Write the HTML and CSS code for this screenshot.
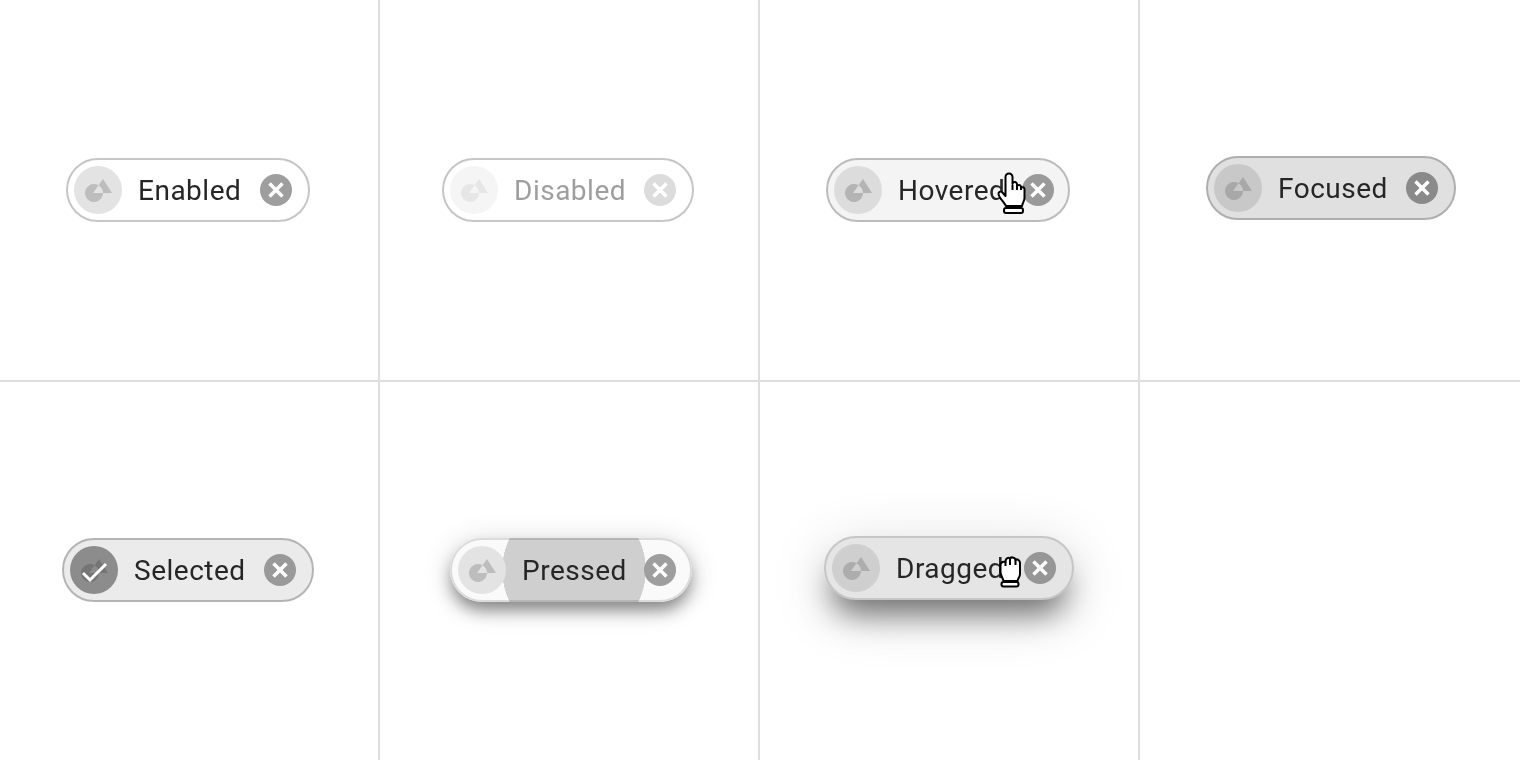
FILE: index.html
```html
<!DOCTYPE html>
<html>
<head>
    <meta name="viewport" content="width=device-width, initial-scale=1">
    <title>Input chip states</title>
    <link rel="stylesheet" href="styles.css">
</head>
<body>
    <main class="board">
        <section class="cell">
            <div class="chip chip-enabled">
                <span class="avatar"><svg class="shape" viewBox="0 0 48 48"><path fill-rule="evenodd" d="M29 13 L38 27 H19 Z M20 18 a9 9 0 1 0 0.01 0 Z"/></svg></span>
                <span class="label">Enabled</span>
                <svg class="close" viewBox="0 0 32 32"><circle cx="16" cy="16" r="16"/><path d="M9.5 9.5 L22.5 22.5 M22.5 9.5 L9.5 22.5"/></svg>
            </div>
        </section>

        <section class="cell">
            <div class="chip chip-disabled">
                <span class="avatar"><svg class="shape" viewBox="0 0 48 48"><path fill-rule="evenodd" d="M29 13 L38 27 H19 Z M20 18 a9 9 0 1 0 0.01 0 Z"/></svg></span>
                <span class="label">Disabled</span>
                <svg class="close" viewBox="0 0 32 32"><circle cx="16" cy="16" r="16"/><path d="M9.5 9.5 L22.5 22.5 M22.5 9.5 L9.5 22.5"/></svg>
            </div>
        </section>

        <section class="cell">
            <div class="chip chip-hovered">
                <span class="avatar"><svg class="shape" viewBox="0 0 48 48"><path fill-rule="evenodd" d="M29 13 L38 27 H19 Z M20 18 a9 9 0 1 0 0.01 0 Z"/></svg></span>
                <span class="label">Hovered</span>
                <svg class="close" viewBox="0 0 32 32"><circle cx="16" cy="16" r="16"/><path d="M9.5 9.5 L22.5 22.5 M22.5 9.5 L9.5 22.5"/></svg>
                <svg class="cursor cursor-point" viewBox="0 0 30 43">
                    <path d="M8.5 21 V5 a3.5 3.5 0 0 1 7 0 V12 a2.2 2.2 0 0 1 4.5 .5 V14 a2.2 2.2 0 0 1 4 .5 V16 a2 2 0 0 1 3.5 .5 V26 c0 3 -2 5 -2.5 8 H9 C7 30 2 26 1.5 22 c-.3 -2 2 -3 3.5 -2 L8.5 24 Z"/>
                    <path d="M15.5 13 V18 M20 14 V18 M24 16 V18"/>
                    <rect x="7" y="36" width="19" height="5" rx="2"/>
                </svg>
            </div>
        </section>

        <section class="cell cell-last">
            <div class="chip chip-focused">
                <span class="avatar"><svg class="shape" viewBox="0 0 48 48"><path fill-rule="evenodd" d="M29 13 L38 27 H19 Z M20 18 a9 9 0 1 0 0.01 0 Z"/></svg></span>
                <span class="label">Focused</span>
                <svg class="close" viewBox="0 0 32 32"><circle cx="16" cy="16" r="16"/><path d="M9.5 9.5 L22.5 22.5 M22.5 9.5 L9.5 22.5"/></svg>
            </div>
        </section>

        <section class="cell">
            <div class="chip chip-selected">
                <span class="avatar"><svg class="shape" viewBox="0 0 48 48"><path fill-rule="evenodd" d="M29 13 L38 27 H19 Z M20 18 a9 9 0 1 0 0.01 0 Z"/><path class="check" d="M13 27 L20 34 L36 18"/></svg></span>
                <span class="label">Selected</span>
                <svg class="close" viewBox="0 0 32 32"><circle cx="16" cy="16" r="16"/><path d="M9.5 9.5 L22.5 22.5 M22.5 9.5 L9.5 22.5"/></svg>
            </div>
        </section>

        <section class="cell">
            <div class="chip chip-pressed">
                <span class="avatar"><svg class="shape" viewBox="0 0 48 48"><path fill-rule="evenodd" d="M29 13 L38 27 H19 Z M20 18 a9 9 0 1 0 0.01 0 Z"/></svg></span>
                <span class="label">Pressed</span>
                <svg class="close" viewBox="0 0 32 32"><circle cx="16" cy="16" r="16"/><path d="M9.5 9.5 L22.5 22.5 M22.5 9.5 L9.5 22.5"/></svg>
            </div>
        </section>

        <section class="cell">
            <div class="chip chip-dragged">
                <span class="avatar"><svg class="shape" viewBox="0 0 48 48"><path fill-rule="evenodd" d="M29 13 L38 27 H19 Z M20 18 a9 9 0 1 0 0.01 0 Z"/></svg></span>
                <span class="label">Dragged</span>
                <svg class="close" viewBox="0 0 32 32"><circle cx="16" cy="16" r="16"/><path d="M9.5 9.5 L22.5 22.5 M22.5 9.5 L9.5 22.5"/></svg>
                <svg class="cursor cursor-grab" viewBox="0 0 24 34">
                    <path d="M2.5 10 C2.5 6.5 6.5 6.5 7.5 7 C7.5 2.5 11 2 12 4 C12.5 1.5 17 2 17.5 5 C19 3.5 22 5 22 8 V19 C22 22 20 23 19.5 26 H5.5 C5 23 2.5 21 2.5 17 Z"/>
                    <path d="M7.5 7 V11 M12 4 V10 M17.5 5 V10"/>
                    <rect x="3.5" y="27" width="17" height="4.5" rx="2"/>
                </svg>
            </div>
        </section>

        <section class="cell cell-last"></section>
    </main>
</body>
</html>
```

FILE: styles.css
```css
html, body {
    height: 100%;
    margin: 0;
    background: #fff;
    overflow: hidden;
}

.board {
    display: grid;
    grid-template-columns: repeat(4, 380px);
    grid-template-rows: 382px 378px;
    height: 760px;
}

.cell {
    display: flex;
    align-items: center;
    justify-content: center;
    border-right: 2px solid #dedede;
}

.cell:nth-child(-n+4) {
    border-bottom: 2px solid #dedede;
}

.cell-last {
    border-right: 0;
}

.chip {
    --avatar: #e3e3e3;
    --shape: #bdbdbd;
    --close: #9e9e9e;
    position: relative;
    display: flex;
    align-items: center;
    box-sizing: border-box;
    height: 64px;
    padding: 0 16px 0 6px;
    border: 2px solid #c6c6c6;
    border-radius: 32px;
    background: #fff;
    color: #262626;
    font: 28px/32px Roboto, sans-serif;
    letter-spacing: 0.5px;
}

.avatar {
    flex: none;
    width: 48px;
    height: 48px;
    border-radius: 50%;
    background: var(--avatar);
}

.shape {
    display: block;
    width: 48px;
    height: 48px;
    fill: var(--shape);
}

.check {
    fill: none;
    stroke: #fff;
    stroke-width: 3;
}

.label {
    flex: 1;
    margin-left: 16px;
    padding-top: 2px;
    will-change: transform; /* grey text edges, no colour fringe */
}

.close {
    flex: none;
    width: 32px;
    height: 32px;
    fill: var(--close);
}

.close path {
    fill: none;
    stroke: #fff;
    stroke-width: 3.5;
}

/* hand cursors sit on top of the chip */
.cursor {
    position: absolute;
    overflow: visible;
}

.cursor path,
.cursor rect {
    fill: #fff;
    stroke: #000;
    stroke-width: 2;
    stroke-linejoin: round;
}

.cursor-point {
    left: 169px;
    top: 12px;
    width: 30px;
    height: 43px;
}

.cursor-grab {
    left: 172px;
    top: 17px;
    width: 24px;
    height: 34px;
}

.chip-enabled {
    width: 244px;
    margin-right: 2px;
}

.chip-disabled {
    width: 252px;
    margin-right: 2px;
    --avatar: #f5f5f5;
    --shape: #e6e6e6;
    --close: #dcdcdc;
    color: #9e9e9e;
}

.chip-hovered {
    width: 244px;
    margin-right: 2px;
    padding-right: 14px;
    background: #f4f4f4;
    --avatar: #dcdcdc;
    --shape: #b4b4b4;
    --close: #9a9a9a;
    border-color: #bcbcbc;
}

.chip-focused {
    width: 250px;
    margin-left: 2px;
    margin-bottom: 4px;
    background: #e0e0e0;
    border-color: #aeaeae;
    --avatar: #c8c8c8;
    --shape: #a8a8a8;
    --close: #8a8a8a;
}

.chip-selected {
    width: 252px;
    margin-right: 2px;
    margin-bottom: 2px;
    background: #ebebeb;
    border-color: #b4b4b4;
    --avatar: #8c8c8c;
    --shape: #757575;
    --close: #999;
}

.chip-pressed {
    width: 242px;
    margin-left: 4px;
    margin-bottom: 2px;
    padding-right: 14px;
    border-color: rgba(0, 0, 0, 0.12);
    background: radial-gradient(circle 72px at 124px 32px, #cfcfcf 71.5px, #fafafa 72px) border-box;
    box-shadow: 0 10px 16px -2px rgba(0, 0, 0, 0.42), 0 4px 30px rgba(0, 0, 0, 0.16);
}

.chip-dragged {
    width: 250px;
    margin-bottom: 6px;
    background: #e5e5e5;
    border-color: #c6c6c6;
    --avatar: #cfcfcf;
    --shape: #adadad;
    --close: #969696;
    box-shadow: 0 22px 30px -8px rgba(0, 0, 0, 0.5), 0 12px 60px rgba(0, 0, 0, 0.16);
}
```
